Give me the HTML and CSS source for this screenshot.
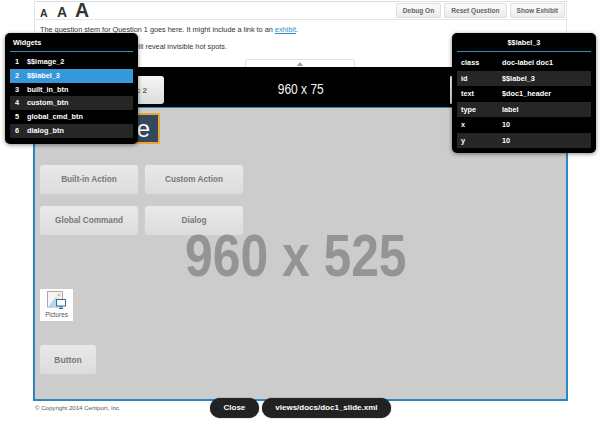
FILE: index.html
```html
<!DOCTYPE html>
<html lang="en">
<head>
<meta charset="utf-8">
<title>Question</title>
<link rel="stylesheet" href="styles.css">
</head>
<body>
<div class="page">
  <div class="upper">
    <div class="toolbar">
      <div class="sizes"><span class="a1">A</span><span class="a2">A</span><span class="a3">A</span></div>
      <div class="tools">
        <button class="tool">Debug On</button>
        <button class="tool">Reset Question</button>
        <button class="tool">Show Exhibit</button>
      </div>
    </div>
    <div class="stem">
      <p>The question stem for Question 1 goes here. It might include a link to an <a href="#">exhibit</a>.</p>
      <p>Clicking on the button below will reveal invisible hot spots.</p>
    </div>
    <div class="tab"><span class="tri"></span></div>
  </div>
  <div class="header">
    <div class="hbtn hbtn-left">c 2</div>
    <div class="htitle">960 x 75</div>
    <div class="hbtn hbtn-right"></div>
  </div>
  <div class="slide">
    <div class="doclabel">e</div>
    <div class="slide-btn b1">Built-in Action</div>
    <div class="slide-btn b2">Custom Action</div>
    <div class="slide-btn b3">Global Command</div>
    <div class="slide-btn b4">Dialog</div>
    <div class="big">960 x 525</div>
    <div class="pic">
      <svg class="pic-icon" width="20" height="18" viewBox="0 0 20 18">
        <rect x="0.5" y="0.5" width="15" height="15.5" fill="#f4f4f4" stroke="#a9a9a9"/>
        <path d="M1 16 L9 6 L15 13 V16 Z" fill="#b9d3ea"/>
        <circle cx="12" cy="4" r="1.5" fill="#efc56a"/>
        <rect x="9.5" y="8.5" width="9" height="6.5" fill="#fff" stroke="#2f6ea5"/>
        <path d="M12 17.5 H16 M14 15 V17.5" stroke="#2f6ea5"/>
      </svg>
      <span class="pic-text">Pictures</span>
    </div>
    <div class="slide-btn b5">Button</div>
  </div>
  <div class="copy">© Copyright 2014 Certiport, Inc.</div>
</div>

<div class="panel widgets">
  <div class="ptitle">Widgets</div>
  <div class="row"><b>1</b><span>$$image_2</span></div>
  <div class="row sel"><b>2</b><span>$$label_3</span></div>
  <div class="row"><b>3</b><span>built_in_btn</span></div>
  <div class="row alt"><b>4</b><span>custom_btn</span></div>
  <div class="row"><b>5</b><span>global_cmd_btn</span></div>
  <div class="row alt"><b>6</b><span>dialog_btn</span></div>
</div>

<div class="panel props">
  <div class="ptitle center">$$label_3</div>
  <div class="prow"><b>class</b><span>doc-label doc1</span></div>
  <div class="prow alt"><b>id</b><span>$$label_3</span></div>
  <div class="prow"><b>text</b><span>$doc1_header</span></div>
  <div class="prow alt"><b>type</b><span>label</span></div>
  <div class="prow"><b>x</b><span>10</span></div>
  <div class="prow alt"><b>y</b><span>10</span></div>
</div>

<div class="pills">
  <div class="pill">Close</div>
  <div class="pill">views/docs/doc1_slide.xml</div>
</div>
</body>
</html>
```

FILE: styles.css
```css
* { box-sizing: border-box; }
html, body { margin: 0; height: 426px; overflow: hidden; background: #fff; }
body { position: relative; font-family: "Liberation Sans", Arial, sans-serif; color: #333; }

.page { position: absolute; left: 33px; top: 1px; width: 535px; height: 425px; }
.upper {
  margin: 0 1px; height: 66px; display: flex; flex-direction: column;
  border-left: 1px solid #e4e4e4; border-right: 1px solid #e4e4e4;
}
.toolbar {
  height: 19px; display: flex; justify-content: space-between; align-items: flex-end;
  border-top: 1px solid #ddd; border-bottom: 1px solid #e6e6e6;
  padding: 0 1px 1px 5px; flex: none;
}
.sizes { display: flex; align-items: baseline; font-weight: bold; color: #333; line-height: 15px; height: 15px; }
.a1 { font-size: 10.5px; width: 17px; }
.a2 { font-size: 14px; width: 18px; }
.a3 { font-size: 19.5px; }
.tools { display: flex; gap: 3px; }
.tool {
  height: 15px; padding: 0 6px; margin: 0; font: bold 6.6px "Liberation Sans", sans-serif; color: #666;
  border: 1px solid #ddd; border-radius: 2px; background: linear-gradient(#fbfbfb, #ececec);
}
.stem { height: 38px; padding: 5px 5px 0; font-size: 7.3px; color: #333; flex: none; }
.stem p { margin: 0 0 7px; line-height: 10px; }
.stem a { color: #2e8fc9; }
.tab {
  position: absolute; left: 212px; top: 58px; width: 110px; height: 10px;
  background: #fff; border: 1px solid #e2e2e2; border-radius: 2px 2px 0 0;
  display: flex; justify-content: center; padding-top: 2px;
}
.tri { width: 0; height: 0; border: 3px solid transparent; border-top: 0; border-bottom: 4px solid #999; }
.header {
  position: absolute; left: 0; top: 66px; width: 535px; height: 40px; background: #000; display: flex;
  align-items: center; justify-content: center;
}
.htitle { color: #f4f4f4; font: 15px/15px "Liberation Sans", sans-serif; transform: scaleX(.8); white-space: nowrap; margin-top: 2px; }
.hbtn {
  position: absolute; top: 9px; height: 28px; border-radius: 3px;
  background: linear-gradient(#f5f5f5, #dcdcdc); color: #666; font-size: 8px; font-weight: bold;
  display: flex; align-items: center; justify-content: flex-end; padding-right: 17px;
}
.hbtn-left { left: 30px; width: 101px; }
.hbtn-right { left: 417px; width: 2px; padding: 0; }
.slide {
  position: absolute; left: 0; top: 106px; width: 535px; height: 294px;
  background: #ccc; border: 2px solid #2e86c1; border-top-width: 1px; overflow: hidden;
}
.doclabel {
  position: absolute; left: 5px; top: 5px; width: 120px; height: 31px; padding: 0 8px 0 0;
  background: #34495e; border: 2px solid #eea433; border-radius: 2px; color: #fff;
  font-size: 24px; line-height: 28px; text-align: right;
}
.slide-btn {
  position: absolute; width: 98px; height: 29px; border-radius: 3px;
  background: linear-gradient(#e9e9e9, #dcdcdc); color: #777; font-size: 8.2px; font-weight: bold;
  display: flex; align-items: center; justify-content: center; box-shadow: 0 0 1px #ddd;
}
.b1 { left: 5px; top: 57px; }
.b2 { left: 110px; top: 57px; }
.b3 { left: 5px; top: 98px; }
.b4 { left: 110px; top: 98px; }
.b5 { left: 5px; top: 237px; width: 56px; font-size: 8.5px; }
.big {
  position: absolute; left: 150px; top: 126px; color: #949494;
  font: bold 60px/44px "Liberation Sans", sans-serif; white-space: nowrap;
  transform: scaleX(.83); transform-origin: left center;
}
.pic {
  position: absolute; left: 5px; top: 181px; width: 33px; height: 32px; background: #fff;
  display: flex; flex-direction: column; align-items: center; padding-top: 2px;
}
.pic-icon { display: block; }
.pic-text { font-size: 6.3px; color: #555; line-height: 9px; margin-top: 1px; }
.copy { position: absolute; left: 2px; top: 403px; font-size: 6.1px; color: #555; }

.panel {
  position: absolute; background: #000; border-radius: 5px;
  box-shadow: 0 1px 4px rgba(0,0,0,.45); color: #fff; font-size: 7.3px; font-weight: bold;
  padding: 0 5px;
}
.ptitle { height: 19px; line-height: 19px; border-bottom: 1px solid #2e8fc9; font-size: 7.3px; padding-left: 3px; margin-bottom: 3px; }
.ptitle.center { text-align: center; padding: 0; }
.widgets { left: 5px; top: 33px; width: 133px; height: 111px; }
.row { height: 13.8px; line-height: 13.8px; display: flex; padding-left: 5px; }
.row b { width: 11px; }
.row span { margin-left: 1px; }
.row.sel { background: #3498db; }
.alt { background: #262626; }
.props { left: 452px; top: 33px; width: 144px; height: 120px; }
.prow { height: 15.5px; line-height: 15.5px; display: flex; padding-left: 4px; }
.prow b { width: 41px; }

.pills { position: absolute; left: 210px; top: 398px; display: flex; gap: 3px; }
.pill {
  height: 19.5px; line-height: 19.5px; border-radius: 10px; background: #222; color: #fff;
  font-size: 8px; font-weight: bold; padding: 0 13.5px; box-shadow: 0 0 1px #000;
}
```
